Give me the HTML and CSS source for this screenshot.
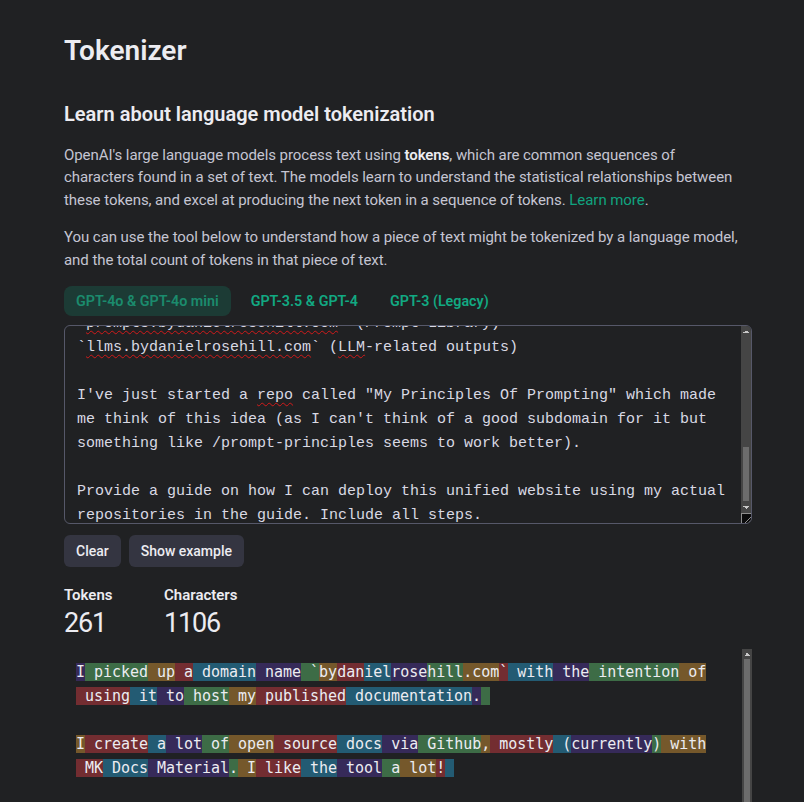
FILE: index.html
```html
<!DOCTYPE html>
<html lang="en">
<head>
<meta charset="utf-8">
<title>Tokenizer</title>
<link rel="stylesheet" href="styles.css">
</head>
<body>
<main class="page">
  <h1 class="title">Tokenizer</h1>
  <h2 class="subtitle">Learn about language model tokenization</h2>
  <p class="lead">OpenAI's large language models process text using <strong>tokens</strong>, which are common sequences of<br>characters found in a set of text. The models learn to understand the statistical relationships between<br>these tokens, and excel at producing the next token in a sequence of tokens. <a href="#" class="link">Learn more</a>.</p>
  <p class="lead">You can use the tool below to understand how a piece of text might be tokenized by a language model,<br>and the total count of tokens in that piece of text.</p>
  <div class="tabs">
    <button class="tab tab-active">GPT-4o &amp; GPT-4o mini</button>
    <button class="tab">GPT-3.5 &amp; GPT-4</button>
    <button class="tab">GPT-3 (Legacy)</button>
  </div>
  <div class="input">
    <div class="input-scroll" id="input">`<span class="typo">prompts.bydanielrosehill.com</span>` (Prompt Library)
`<span class="typo">llms.bydanielrosehill.com</span>` (<span class="typo">LLM</span>-related outputs)

I've just started a <span class="typo">repo</span> called "My Principles Of Prompting" which made
me think of this idea (as I can't think of a good subdomain for it but
something like /prompt-principles seems to work better).

Provide a guide on how I can deploy this unified website using my actual
repositories in the guide. Include all steps.</div>
    <div class="vscroll">
      <div class="sb-btn sb-up"></div>
      <div class="sb-track"><div class="sb-thumb" style="margin-top: 111px; height: 54px;"></div></div>
      <div class="sb-btn sb-down"></div>
      <div class="sb-corner"></div>
    </div>
  </div>
  <div class="actions">
    <button class="btn">Clear</button>
    <button class="btn">Show example</button>
  </div>
  <div class="stats">
    <div class="stat">
      <div class="stat-label">Tokens</div>
      <div class="stat-value">261</div>
    </div>
    <div class="stat">
      <div class="stat-label">Characters</div>
      <div class="stat-value">1106</div>
    </div>
  </div>
  <div class="output">
    <div class="output-scroll">
      <div class="tok-line"><span class="t0">I</span><span class="t1"> picked</span><span class="t2"> up</span><span class="t3"> a</span><span class="t4"> domain</span><span class="t0"> name</span><span class="t1"> `</span><span class="t2">by</span><span class="t3">dan</span><span class="t4">iel</span><span class="t0">rose</span><span class="t1">hill</span><span class="t2">.com</span><span class="t3">`</span><span class="t4"> with</span><span class="t0"> the</span><span class="t1"> intention</span><span class="t2"> of</span></div>
      <div class="tok-line"><span class="t3"> using</span><span class="t4"> it</span><span class="t0"> to</span><span class="t1"> host</span><span class="t2"> my</span><span class="t3"> published</span><span class="t4"> documentation</span><span class="t0">.</span><span class="t1"> </span></div>
      <div class="tok-line"></div>
      <div class="tok-line"><span class="t2">I</span><span class="t3"> create</span><span class="t4"> a</span><span class="t0"> lot</span><span class="t1"> of</span><span class="t2"> open</span><span class="t3"> source</span><span class="t4"> docs</span><span class="t0"> via</span><span class="t1"> Github</span><span class="t2">,</span><span class="t3"> mostly</span><span class="t4"> (</span><span class="t0">currently</span><span class="t1">)</span><span class="t2"> with</span></div>
      <div class="tok-line"><span class="t3"> MK</span><span class="t4"> Docs</span><span class="t0"> Material</span><span class="t1">.</span><span class="t2"> I</span><span class="t3"> like</span><span class="t4"> the</span><span class="t0"> tool</span><span class="t1"> a</span><span class="t2"> lot</span><span class="t3">!</span><span class="t4"> </span></div>
    </div>
    <div class="vscroll">
      <div class="sb-btn sb-up"></div>
      <div class="sb-track"><div class="sb-thumb sb-thumb-full"></div></div>
    </div>
  </div>
</main>
<script src="script.js"></script>
</body>
</html>
```
FILE: styles.css
```css
html, body {
  margin: 0;
  height: 100%;
  overflow: hidden;
  background: #202123;
}
body {
  font-family: Roboto, "Liberation Sans", Arial, sans-serif;
  color: #ececf1;
}
.page {
  width: 688px;
  padding: 34px 0 0 64px;
}
.title {
  font-size: 28px;
  font-weight: 600;
  line-height: 34px;
  margin: 0 0 32px;
}
.subtitle {
  font-size: 20px;
  font-weight: 600;
  line-height: 28px;
  margin: 0 0 16px;
}
.lead {
  font-size: 15px;
  letter-spacing: -0.06px;
  line-height: 22.4px;
  color: #c5c5d2;
  margin: 0 0 15px;
  white-space: nowrap;
}
.lead strong {
  color: #ececf1;
  font-weight: 600;
}
.link {
  color: #10a37f;
  text-decoration: none;
}
.tabs {
  display: flex;
  gap: 8px;
  margin-bottom: 9px;
}
.tab {
  height: 30px;
  padding: 0 12px;
  border: 0;
  border-radius: 8px;
  background: transparent;
  color: #12a982;
  font-family: Roboto, "Liberation Sans", Arial, sans-serif;
  font-size: 14.3px;
  font-weight: 600;
}
.tab-active {
  background: rgba(16, 163, 127, 0.2);
  color: #1b8b6d;
}
.input {
  display: flex;
  box-sizing: border-box;
  height: 199px;
  border: 1px solid #565869;
  border-radius: 6px;
  overflow: hidden;
}
.input-scroll {
  flex: 1;
  min-width: 0;
  padding: 12px;
  overflow: hidden;
  font-family: "Liberation Mono", monospace;
  font-size: 15px;
  line-height: 24px;
  color: #d9d9e3;
  white-space: pre-wrap;
}
.typo {
  text-decoration: underline wavy #d11a1a;
  text-decoration-thickness: 1px;
  text-underline-offset: 3px;
  text-decoration-skip-ink: none;
}
.vscroll {
  width: 10px;
  flex: none;
  display: flex;
  flex-direction: column;
  background: #454545;
}
.sb-btn {
  height: 10px;
  flex: none;
  background-repeat: no-repeat;
  background-size: 3px 3px, 3px 3px;
}
.sb-up {
  background-image: linear-gradient(to bottom right, transparent 50%, #c8c8c8 50%), linear-gradient(to bottom left, transparent 50%, #c8c8c8 50%);
  background-position: 2px 4px, 5px 4px;
}
.sb-down {
  background-image: linear-gradient(to top right, transparent 50%, #c8c8c8 50%), linear-gradient(to top left, transparent 50%, #c8c8c8 50%);
  background-position: 2px 3px, 5px 3px;
}
.sb-track {
  flex: 1;
  display: flex;
  flex-direction: column;
  padding: 0 2px;
}
.sb-thumb {
  flex: none;
  background: #6c6c6c;
}
.sb-thumb-full {
  flex: 1;
}
.sb-corner {
  height: 10px;
  flex: none;
  box-sizing: border-box;
  background-color: #0b0b0c;
  border-top: 1px solid #8e8e8e;
  border-left: 1px solid #8e8e8e;
  background-image: linear-gradient(135deg, transparent 62%, #8e8e8e 62%, #8e8e8e 70%, transparent 70%, transparent 80%, #8e8e8e 80%, #8e8e8e 88%, transparent 88%);
}
.actions {
  display: flex;
  gap: 8px;
  margin-top: 11px;
}
.btn {
  height: 32px;
  padding: 0 12px;
  border: 0;
  border-radius: 6px;
  background: #343541;
  color: #ececf1;
  font-family: Roboto, "Liberation Sans", Arial, sans-serif;
  font-size: 14px;
  font-weight: 500;
}
.stats {
  display: grid;
  grid-template-columns: 100px auto;
  justify-content: start;
  margin-top: 18px;
}
.stat-label {
  font-size: 15px;
  line-height: 20px;
  font-weight: 600;
}
.stat-value {
  margin-top: 2px;
  font-size: 27px;
  letter-spacing: -1.2px;
  line-height: 32px;
  font-weight: 400;
}
.output {
  display: flex;
  height: 153px;
  margin-top: 10px;
}
.output-scroll {
  flex: 1;
  min-width: 0;
  padding: 11px 12px 0;
  overflow: hidden;
  font-family: "DejaVu Sans Mono", monospace;
  font-size: 15px;
  letter-spacing: -0.03px;
  line-height: 24px;
  color: #ececf1;
}
.tok-line {
  white-space: pre;
  height: 24px;
}
.t0 { background: rgba(107, 64, 216, 0.3); }
.t1 { background: rgba(104, 222, 122, 0.4); }
.t2 { background: rgba(244, 172, 54, 0.4); }
.t3 { background: rgba(239, 65, 70, 0.4); }
.t4 { background: rgba(39, 181, 234, 0.4); }
```
FILE: script.js
```js
document.getElementById('input').scrollTop = 26;
```
